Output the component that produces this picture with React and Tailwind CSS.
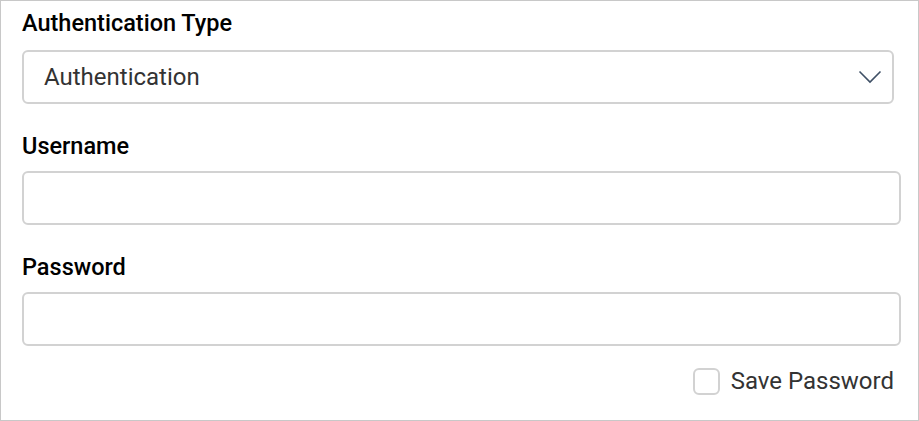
import { useState } from "react";

const Field = ({ label, type = "text" }) => (
  <div className="flex flex-col">
    <label className="text-[23.5px] leading-[28px] font-medium text-black">{label}</label>
    <input
      type={type}
      className="mt-[11px] h-[54px] w-full rounded-[6px] border-2 border-[#d2d2d2] bg-white px-[20px] text-[24px] text-[#333] outline-none"
    />
  </div>
);

export default function App() {
  const [save, setSave] = useState(false);

  return (
    <div
      className="h-[421px] w-[919px] border border-[#c8c8c8] bg-white px-[21px] pt-[8px]"
      style={{ fontFamily: "Roboto, 'Liberation Sans', sans-serif" }}
    >
      <div className="flex flex-col">
        <label className="text-[23.5px] leading-[28px] font-medium text-black">Authentication Type</label>
        <div className="mt-[13px] flex h-[54px] w-[872px] items-center justify-between rounded-[6px] border-2 border-[#d2d2d2] bg-white pl-[20px] pr-[10px]">
          <span className="text-[24px] text-[#333]">Authentication</span>
          <svg width="24" height="14" viewBox="0 0 24 14" fill="none">
            <path d="M1.5 1.5 L12 12 L22.5 1.5" stroke="#3f5066" strokeWidth="1.6" />
          </svg>
        </div>
      </div>

      <div className="mt-[28px] w-[879px]">
        <Field label="Username" />
      </div>

      <div className="mt-[28px] w-[879px]">
        <Field label="Password" type="password" />
      </div>

      <div className="mt-[21px] flex w-[872px] justify-end">
        <label className="flex items-center gap-[11px] cursor-pointer">
          <span
            onClick={() => setSave(!save)}
            className="h-[27px] w-[27px] rounded-[6px] border-2 border-[#d2d2d2] bg-white"
          />
          <span className="text-[24px] leading-[28px] text-[#333]">Save Password</span>
        </label>
      </div>
    </div>
  );
}
